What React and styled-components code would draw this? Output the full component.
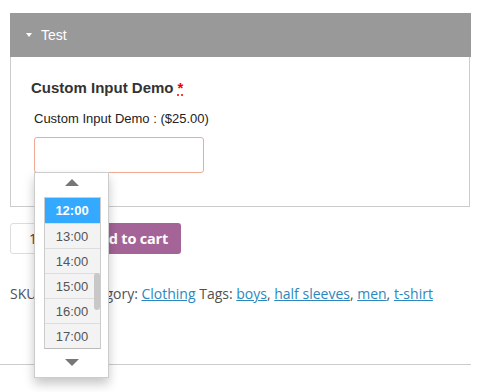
import React from 'react';
import styled, { createGlobalStyle } from 'styled-components';

const GlobalStyle = createGlobalStyle`
  body {
    margin: 0;
    background: #fff;
    font-family: "Liberation Sans", Arial, sans-serif;
  }
`;

const Page = styled.div`
  width: 485px;
  height: 392px;
  padding-top: 13px;
  box-sizing: border-box;
  overflow: hidden;
`;

const Accordion = styled.div`
  width: 461px;
  margin-left: 10px;
`;

const AccordionHeader = styled.div`
  height: 44px;
  background: #999;
  display: flex;
  align-items: center;
  padding-left: 16px;
  gap: 9px;
  color: #fff;
  font-size: 14px;
`;

const Caret = styled.span`
  width: 0;
  height: 0;
  border-left: 3.5px solid transparent;
  border-right: 3.5px solid transparent;
  border-top: 4px solid #fff;
  margin-top: -1px;
`;

const AccordionBody = styled.div`
  border: 1px solid #ccc;
  border-top: none;
  width: 460px;
  box-sizing: border-box;
  height: 150px;
  padding: 22px 0 0 20px;
`;

const FieldTitle = styled.div`
  font-weight: bold;
  font-size: 15px;
  color: #333;
`;

const Required = styled.abbr`
  color: #e00;
  text-decoration: underline dotted;
  text-underline-offset: 2px;
  margin-left: 4px;
`;

const FieldLabel = styled.div`
  font-size: 13px;
  color: #222;
  margin: 15px 0 0 3px;
`;

const InputWrap = styled.div`
  position: relative;
  margin: 11px 0 0 3px;
  width: 170px;
`;

const TimeInput = styled.div`
  height: 36px;
  box-sizing: border-box;
  border: 1px solid #f0aa92;
  border-radius: 3px;
  background: #fff;
`;

const Dropdown = styled.div`
  position: absolute;
  z-index: 5;
  top: 35px;
  left: 0;
  width: 75px;
  height: 206px;
  box-sizing: border-box;
  background: #fff;
  border: 1px solid #ccc;
  box-shadow: 0 6px 10px rgba(0, 0, 0, 0.22);
  display: flex;
  flex-direction: column;
  align-items: center;
`;

const Arrow = styled.span`
  width: 0;
  height: 0;
  border-left: 7px solid transparent;
  border-right: 7px solid transparent;
  ${p => (p.$up ? 'border-bottom: 7px solid #777;' : 'border-top: 7px solid #777;')}
  margin: ${p => (p.$up ? '6px 0 11px' : '10px 0 0')};
`;

const TimeList = styled.div`
  position: relative;
  width: 57px;
  box-sizing: border-box;
  border: 1px solid #ccc;
  border-bottom-color: #bbb;
  margin-left: 1px;
`;

const TimeItem = styled.div`
  height: 25px;
  box-sizing: border-box;
  border-top: ${p => (p.$first ? 'none' : '1px solid #ddd')};
  background: ${p => (p.$active ? '#33a9ff' : '#f3f3f3')};
  color: ${p => (p.$active ? '#fff' : '#555')};
  font-weight: ${p => (p.$active ? 'bold' : 'normal')};
  font-size: 13px;
  display: flex;
  align-items: center;
  justify-content: center;
`;

const ScrollThumb = styled.div`
  position: absolute;
  right: 0;
  top: 75px;
  width: 6px;
  height: 37px;
  border-radius: 3px;
  background: #c8c8c8;
`;

const CartRow = styled.div`
  display: flex;
  gap: 8px;
  margin: 16px 0 0 10px;
`;

const Qty = styled.div`
  width: 50px;
  height: 31px;
  box-sizing: border-box;
  border: 1px solid #ddd;
  border-radius: 3px;
  font-family: "Open Sans", sans-serif;
  font-size: 14px;
  color: #43454b;
  display: flex;
  align-items: center;
  padding-left: 18px;
`;

const CartButton = styled.div`
  width: 113px;
  height: 31px;
  background: #a46497;
  border-radius: 3px;
  color: #fff;
  font-family: "Open Sans", sans-serif;
  font-weight: bold;
  font-size: 14.5px;
  letter-spacing: -0.2px;
  display: flex;
  align-items: center;
  padding-left: 22px;
  box-sizing: border-box;
`;

const Meta = styled.div`
  margin: 30px 0 0 10px;
  font-family: "Open Sans", sans-serif;
  font-size: 14px;
  color: #515151;
  white-space: nowrap;
`;

const MetaPart = styled.span`
  margin-right: 4px;
`;

const MetaLink = styled.a`
  color: #2b87bd;
  text-decoration: underline;
`;

const Divider = styled.hr`
  width: 471px;
  margin: 61px 0 0;
  border: none;
  border-top: 1px solid #ccc;
`;

const times = ['12:00', '13:00', '14:00', '15:00', '16:00', '17:00'];
const tags = ['boys', 'half sleeves', 'men', 't-shirt'];

export default function App() {
  return (
    <Page>
      <GlobalStyle />
      <Accordion>
        <AccordionHeader>
          <Caret />
          Test
        </AccordionHeader>
        <AccordionBody>
          <FieldTitle>
            Custom Input Demo<Required title="required">*</Required>
          </FieldTitle>
          <FieldLabel>Custom Input Demo : ($25.00)</FieldLabel>
          <InputWrap>
            <TimeInput />
            <Dropdown>
              <Arrow $up />
              <TimeList>
                {times.map((t, i) => (
                  <TimeItem key={t} $first={i === 0} $active={i === 0}>{t}</TimeItem>
                ))}
                <ScrollThumb />
              </TimeList>
              <Arrow />
            </Dropdown>
          </InputWrap>
        </AccordionBody>
      </Accordion>
      <CartRow>
        <Qty>1</Qty>
        <CartButton>Add to cart</CartButton>
      </CartRow>
      <Meta>
        <MetaPart>SKU: N/A</MetaPart> Category: <MetaLink>Clothing</MetaLink> Tags:{' '}
        {tags.map((t, i) => (
          <React.Fragment key={t}>
            <MetaLink>{t}</MetaLink>{i < tags.length - 1 ? ', ' : ''}
          </React.Fragment>
        ))}
      </Meta>
      <Divider />
    </Page>
  );
}
